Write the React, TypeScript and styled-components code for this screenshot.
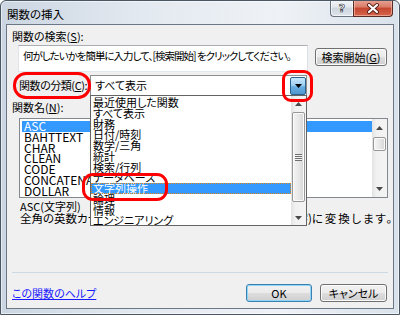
import React from "react";
import styled, { createGlobalStyle } from "styled-components";

const GlobalStyle = createGlobalStyle`
  html, body { margin: 0; padding: 0; background: #ffffff; }
  body {
    font-family: "Noto Sans CJK JP", "Noto Sans", sans-serif;
    font-size: 11px;
    font-feature-settings: "palt" 1;
    color: #000;
  }
  #root { width: 400px; height: 315px; }
`;

const Window = styled.div`
  width: 400px;
  height: 315px;
  box-sizing: border-box;
  border: 1px solid #4b5663;
  border-radius: 6px 6px 0 0;
  background: linear-gradient(to right, #cbd6e2 0%, #e3e9f0 35%, #eef2f6 70%, #d9e1ea 100%);
  box-shadow: inset 0 0 0 1px rgba(255, 255, 255, 0.55);
  display: flex;
  flex-direction: column;
  overflow: hidden;
`;

const TitleBar = styled.div`
  height: 23px;
  flex: none;
  display: flex;
  align-items: flex-start;
  justify-content: space-between;
  padding: 0 6px 0 6px;
`;

const Title = styled.div`
  font-size: 11.5px;
  line-height: 14px;
  padding-top: 6px;
  color: #000;
`;

const CaptionGroup = styled.div`
  display: flex;
  margin-top: -1px;
`;

const HelpButton = styled.div`
  width: 23px;
  height: 17px;
  box-sizing: border-box;
  border: 1px solid #69737f;
  border-top: none;
  border-right: none;
  border-radius: 0 0 0 4px;
  background: linear-gradient(to bottom, #f3f5f8 0%, #e2e7ed 45%, #ccd4dd 50%, #dfe5eb 100%);
  box-shadow: inset 0 0 0 1px rgba(255, 255, 255, 0.6);
  display: flex;
  align-items: center;
  justify-content: center;
  font-family: "DejaVu Sans", sans-serif;
  font-weight: bold;
  font-size: 11px;
  color: #ffffff;
  -webkit-text-stroke: 0.7px #3f4650;
`;

const CloseButton = styled.div`
  width: 40px;
  height: 17px;
  box-sizing: border-box;
  border: 1px solid #5a2a22;
  border-top: none;
  border-radius: 0 0 4px 0;
  background: linear-gradient(to bottom, #e9a597 0%, #d97a66 45%, #c5452f 50%, #d5664c 100%);
  box-shadow: inset 0 0 0 1px rgba(255, 220, 210, 0.5);
  display: flex;
  align-items: center;
  justify-content: center;
`;

const Client = styled.div`
  position: relative;
  flex: 1;
  margin: 0 5px 5px 5px;
  border: 1px solid #6b7784;
  background: #f0f0f0;
  display: flex;
  flex-direction: column;
`;

const FieldLabel = styled.div<{ $indent?: number; $top?: number }>`
  line-height: 13px;
  padding-left: ${(p) => p.$indent ?? 5}px;
  margin-top: ${(p) => p.$top ?? 0}px;
  white-space: nowrap;
`;

const Accel = styled.span`
  text-decoration: underline;
`;

const SearchRow = styled.div`
  display: flex;
  align-items: flex-start;
  margin-top: 2px;
  padding-left: 11px;
  gap: 7px;
`;

const SearchBox = styled.div`
  width: 290px;
  height: 27px;
  box-sizing: border-box;
  background: #fff;
  border: 1px solid #abadb3;
  border-left-color: #e2e3ea;
  border-right-color: #dbdfe6;
  border-bottom-color: #e3e9ef;
  padding: 3px 0 0 4px;
  font-size: 10.5px;
  line-height: 13px;
  letter-spacing: -1px;
  white-space: nowrap;
  overflow: hidden;
`;

const PushButton = styled.div<{ $width: number; $default?: boolean; $top?: number }>`
  width: ${(p) => p.$width}px;
  height: 18px;
  margin-top: ${(p) => p.$top ?? 0}px;
  box-sizing: border-box;
  border: 1px solid ${(p) => (p.$default ? "#3c7fb1" : "#707070")};
  border-radius: 3px;
  background: linear-gradient(to bottom, #f2f2f2 0%, #ebebeb 48%, #dddddd 52%, #cfcfcf 100%);
  box-shadow: inset 0 0 0 1px ${(p) => (p.$default ? "#8fd6fb" : "#fbfbfb")};
  display: flex;
  align-items: center;
  justify-content: center;
  line-height: 13px;
  white-space: nowrap;
`;

const CategoryRow = styled.div`
  display: flex;
  align-items: center;
  margin-top: 3px;
  padding-left: 12px;
`;

const CategoryLabel = styled.div`
  width: 71px;
  line-height: 13px;
  letter-spacing: -0.45px;
  white-space: nowrap;
`;

const Combo = styled.div`
  width: 217px;
  height: 21px;
  box-sizing: border-box;
  background: #fff;
  border: 1px solid #8e8f8f;
  display: flex;
  align-items: center;
  justify-content: space-between;
  padding-left: 4px;
`;

const ComboText = styled.span`
  line-height: 13px;
`;

const DropButton = styled.div`
  width: 16px;
  height: 18px;
  box-sizing: border-box;
  border: 1px solid #2c628b;
  border-radius: 2px;
  background: linear-gradient(to bottom, #c8e6fa 0%, #9fd0f2 45%, #6aaee2 55%, #4f97d0 100%);
  display: flex;
  align-items: center;
  justify-content: center;
`;

const ListBox = styled.div`
  margin: 4px 0 0 12px;
  width: 369px;
  height: 80px;
  box-sizing: border-box;
  background: #fff;
  border: 1px solid #828790;
  display: flex;
`;

const ListItems = styled.div<{ $padTop: number; $padLeft: number }>`
  flex: 1;
  padding: ${(p) => p.$padTop}px 0 0 ${(p) => p.$padLeft}px;
  overflow: hidden;
`;

const ListItem = styled.div<{ $selected?: boolean; $focus?: boolean; $latin?: boolean; $h: number }>`
  height: ${(p) => p.$h}px;
  line-height: ${(p) => p.$h}px;
  padding-left: 2px;
  box-sizing: border-box;
  white-space: nowrap;
  font-size: ${(p) => (p.$latin ? 12 : 11)}px;
  background: ${(p) => (p.$selected ? "#3399ff" : "transparent")};
  color: ${(p) => (p.$selected ? "#ffffff" : "#000000")};
  outline: ${(p) => (p.$focus ? "1px dotted #e0861f" : "none")};
  outline-offset: -1px;
`;

const ScrollBar = styled.div`
  width: 15px;
  flex: none;
  display: flex;
  flex-direction: column;
  background: linear-gradient(to right, #e3e3e3 0%, #f1f1f1 30%, #f4f4f4 100%);
`;

const ScrollArrow = styled.div<{ $h: number }>`
  height: ${(p) => p.$h}px;
  flex: none;
  display: flex;
  align-items: center;
  justify-content: center;
`;

const ScrollTrack = styled.div`
  flex: 1;
  display: flex;
  flex-direction: column;
  align-items: center;
`;

const ScrollThumb = styled.div<{ $top: number; $h: number }>`
  margin-top: ${(p) => p.$top}px;
  width: 13px;
  height: ${(p) => p.$h}px;
  box-sizing: border-box;
  border: 1px solid #979797;
  border-radius: 2px;
  background: linear-gradient(to right, #f4f4f4 0%, #e8e8e8 50%, #d6d6d6 100%);
  box-shadow: inset 0 0 0 1px #fbfbfb;
  display: flex;
  align-items: center;
  justify-content: center;
`;

const Grip = styled.div`
  width: 7px;
  height: 7px;
  background: repeating-linear-gradient(to bottom, #6f6f6f 0px, #6f6f6f 1px, #f4f4f4 1px, #f4f4f4 2px);
`;

const Description = styled.div`
  margin-top: 2px;
  padding-left: 13px;
  line-height: 12px;
  white-space: nowrap;
`;

const DescLine = styled.div<{ $size: number }>`
  font-size: ${(p) => p.$size}px;
`;

const WideTail = styled.span`
  letter-spacing: 1.8px;
`;

const Footer = styled.div`
  margin-top: auto;
  padding: 0 6px 6px 5px;
  display: flex;
  flex-direction: column;
`;

const Separator = styled.div`
  height: 1px;
  width: 376px;
  background: #cfd9e2;
  margin-bottom: 11px;
`;

const FooterRow = styled.div`
  display: flex;
  align-items: center;
  justify-content: space-between;
`;

const HelpLink = styled.span`
  color: #1a1aff;
  text-decoration: underline;
  line-height: 13px;
  margin-top: 1px;
`;

const ButtonGroup = styled.div`
  display: flex;
  gap: 8px;
`;

const DropList = styled.div`
  position: absolute;
  left: 83px;
  top: 70px;
  width: 217px;
  height: 131px;
  box-sizing: border-box;
  background: #fff;
  border: 1px solid #646464;
  display: flex;
  z-index: 2;
`;

const Mark = styled.div<{ $x: number; $y: number; $w: number; $h: number; $r: number }>`
  position: absolute;
  left: ${(p) => p.$x}px;
  top: ${(p) => p.$y}px;
  width: ${(p) => p.$w}px;
  height: ${(p) => p.$h}px;
  box-sizing: border-box;
  border: 3px solid #ff0000;
  border-radius: ${(p) => p.$r}px;
  z-index: 3;
`;

const ArrowUp = () => (
  <svg width="7" height="4" viewBox="0 0 7 4">
    <path d="M3.5 0 L7 4 L0 4 Z" fill="#4a4a4a" />
  </svg>
);

const ArrowDown = ({ color = "#4a4a4a" }: { color?: string }) => (
  <svg width="7" height="4" viewBox="0 0 7 4">
    <path d="M0 0 L7 0 L3.5 4 Z" fill={color} />
  </svg>
);

const CloseGlyph = () => (
  <svg width="14" height="11" viewBox="0 0 14 11">
    <path d="M3 2 L11 9 M11 2 L3 9" stroke="#5a2019" strokeWidth="4" strokeLinecap="round" />
    <path d="M3 2 L11 9 M11 2 L3 9" stroke="#ffffff" strokeWidth="2.2" strokeLinecap="round" />
  </svg>
);

const functions = ["ASC", "BAHTTEXT", "CHAR", "CLEAN", "CODE", "CONCATENATE", "DOLLAR"];
const categories = [
  "最近使用した関数",
  "すべて表示",
  "財務",
  "日付/時刻",
  "数学/三角",
  "統計",
  "検索/行列",
  "データベース",
  "文字列操作",
  "論理",
  "情報",
  "エンジニアリング",
];

export default function App() {
  return (
    <>
      <GlobalStyle />
      <Window>
        <TitleBar>
          <Title>関数の挿入</Title>
          <CaptionGroup>
            <HelpButton>?</HelpButton>
            <CloseButton>
              <CloseGlyph />
            </CloseButton>
          </CaptionGroup>
        </TitleBar>
        <Client>
          <FieldLabel $top={5}>
            関数の検索(<Accel>S</Accel>):
          </FieldLabel>
          <SearchRow>
            <SearchBox>何がしたいかを簡単に入力して、[検索開始] をクリックしてください。</SearchBox>
            <PushButton $width={72} $top={3}>
              検索開始(<Accel>G</Accel>)
            </PushButton>
          </SearchRow>
          <CategoryRow>
            <CategoryLabel>
              関数の分類(<Accel>C</Accel>):
            </CategoryLabel>
            <Combo>
              <ComboText>すべて表示</ComboText>
              <DropButton>
                <ArrowDown color="#000000" />
              </DropButton>
            </Combo>
          </CategoryRow>
          <FieldLabel $top={5}>
            関数名(<Accel>N</Accel>):
          </FieldLabel>
          <ListBox>
            <ListItems $padTop={2} $padLeft={2}>
              {functions.map((f, i) => (
                <ListItem key={f} $latin $h={10.75} $selected={i === 0}>
                  {f}
                </ListItem>
              ))}
            </ListItems>
            <ScrollBar>
              <ScrollArrow $h={17}>
                <ArrowUp />
              </ScrollArrow>
              <ScrollTrack>
                <ScrollThumb $top={1} $h={14} />
              </ScrollTrack>
              <ScrollArrow $h={16}>
                <ArrowDown />
              </ScrollArrow>
            </ScrollBar>
          </ListBox>
          <Description>
            <DescLine $size={11}>ASC(文字列)</DescLine>
            <DescLine $size={11.5}>
              全角の英数カナ文字を、半角の英数カナ文字 (1 バイト文字)<WideTail>に変換します。</WideTail>
            </DescLine>
          </Description>
          <Footer>
            <Separator />
            <FooterRow>
              <HelpLink>この関数のヘルプ</HelpLink>
              <ButtonGroup>
                <PushButton $width={66} $default>
                  OK
                </PushButton>
                <PushButton $width={67}>キャンセル</PushButton>
              </ButtonGroup>
            </FooterRow>
          </Footer>

          <DropList>
            <ListItems $padTop={1} $padLeft={0}>
              {categories.map((c, i) => (
                <ListItem key={c} $h={10.75} $selected={i === 8} $focus={i === 8}>
                  {c}
                </ListItem>
              ))}
            </ListItems>
            <ScrollBar>
              <ScrollArrow $h={15}>
                <ArrowUp />
              </ScrollArrow>
              <ScrollTrack>
                <ScrollThumb $top={1} $h={90}>
                  <Grip />
                </ScrollThumb>
              </ScrollTrack>
              <ScrollArrow $h={15}>
                <ArrowDown />
              </ScrollArrow>
            </ScrollBar>
          </DropList>

          <Mark $x={6} $y={47} $w={78} $h={27} $r={13} />
          <Mark $x={275} $y={45} $w={31} $h={32} $r={9} />
          <Mark $x={75} $y={148} $w={86} $h={28} $r={11} />
        </Client>
      </Window>
    </>
  );
}
